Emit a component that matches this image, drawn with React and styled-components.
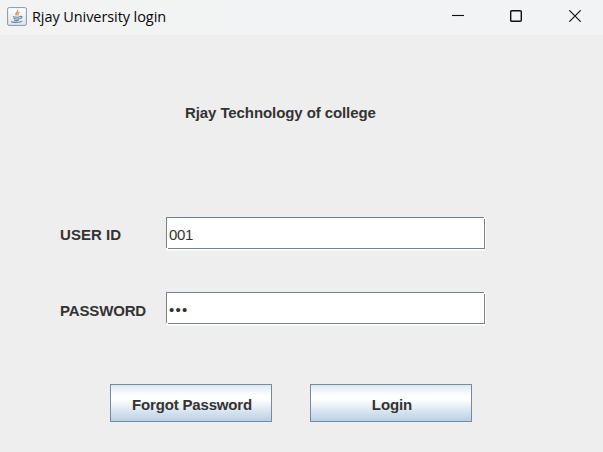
import React from "react";
import styled, { createGlobalStyle } from "styled-components";

const GlobalStyle = createGlobalStyle`
  * { box-sizing: border-box; }
  html, body { margin: 0; padding: 0; overflow: hidden; background: #eeeeee; }
`;

const Window = styled.main`
  display: flex;
  flex-direction: column;
  width: 603px;
  height: 452px;
  background: #eeeeee;
  color: #333333;
  font-family: "Liberation Sans", Arial, sans-serif;
`;

const TitleBar = styled.header`
  display: flex;
  align-items: center;
  height: 35px;
  flex: none;
  padding: 0 22px 3px 7px;
  background: linear-gradient(90deg, #f3f3f3, #f1f3f5);
`;

const WindowTitle = styled.span`
  flex: 1;
  margin-left: 5px;
  padding-top: 2px;
  color: #080808;
  font: 14.5px/20px "Open Sans", "Noto Sans", sans-serif;
  letter-spacing: ${(p) => p.$spacing};
  white-space: nowrap;
`;

const WindowControls = styled.div`
  display: grid;
  grid-template-columns: 58px 59px 12px;
`;

const ControlButton = styled.button`
  display: flex;
  width: 12px;
  height: 12px;
  padding: 0;
  border: 0;
  background: none;
  color: #111111;
`;

const Heading = styled.h1`
  margin: 68px 0 0 185px;
  font-size: 15px;
  font-weight: 700;
  line-height: 20px;
  letter-spacing: -0.09px;
  white-space: nowrap;
`;

const Form = styled.form`
  display: flex;
  flex-direction: column;
  gap: 43px;
  margin: 94px 0 0 60px;
`;

const Field = styled.div`
  display: grid;
  grid-template-columns: 106px 319px;
  height: 32px;
`;

const Label = styled.label`
  padding-top: ${(p) => p.$top};
  font-size: 15px;
  font-weight: 700;
  line-height: 18px;
  letter-spacing: ${(p) => p.$spacing};
  white-space: nowrap;
`;

const Input = styled.input`
  width: 319px;
  height: 32px;
  padding: 4px 3px 1px;
  border: 0;
  border-radius: 0;
  outline: none;
  background:
    linear-gradient(#7a8188, #7a8188) 0 0 / 318px 1px no-repeat,
    linear-gradient(#7a8188, #7a8188) 0 0 / 1px 31px no-repeat,
    linear-gradient(#7a8188, #7a8188) 318px 2px / 1px 30px no-repeat,
    linear-gradient(#7a8188, #7a8188) 2px 31px / 317px 1px no-repeat,
    #ffffff;
  box-shadow: 1px 1px 0 #ffffff, 1px 2px 0 #f8f8f8;
  color: #333333;
  font: 15px "Liberation Sans", Arial, sans-serif;
  letter-spacing: ${(p) => p.$spacing};
`;

const Actions = styled.div`
  display: flex;
  gap: 38px;
  margin: 17px 0 0 50px;
`;

const ActionButton = styled.button`
  width: 162px;
  height: 38px;
  padding: 2px 0 0 2px;
  border: 1px solid #7a8a99;
  border-radius: 0;
  background: linear-gradient(#dde8f3 0%, #ffffff 30%, #ffffff 40%, #b8cfe5 100%);
  color: #333333;
  font: 700 15px "Liberation Sans", Arial, sans-serif;
  letter-spacing: ${(p) => p.$spacing};
  white-space: nowrap;
`;

function JavaIcon() {
  return (
    <svg width="20" height="19" viewBox="0 0 20 19" fill="none" aria-hidden="true">
      <defs>
        <linearGradient id="tile" x2="0" y2="1">
          <stop stopColor="#ffffff" />
          <stop offset="1" stopColor="#dce5eb" />
        </linearGradient>
      </defs>
      <rect x=".6" y=".6" width="18.8" height="17.8" rx="1.5" fill="url(#tile)" stroke="#8499a7" />
      <path d="M10.3 3c1.8 2-3.2 3-.8 5.5M12.6 5c-2.2 1-2.4 1.8-1.1 3.4" stroke="#e58b4d" strokeWidth="1.3" />
      <path d="M6 9.5c1.8 1 5.8.8 7.5 0M6.4 11.3c2 1 4.5.8 6.1.2M7 13c1.5.8 3.7.7 5 0M4.5 14.2c-.5 1.6 9 1.6 10.6 0M13.2 9.5c2.6-.7 2.4 1.7-.5 2.3" stroke="#6386a0" strokeWidth="1.1" />
    </svg>
  );
}

export default function App() {
  return (
    <>
      <GlobalStyle />
      <Window>
        <TitleBar>
          <JavaIcon />
          <WindowTitle $spacing="-0.08px">Rjay University login</WindowTitle>
          <WindowControls>
            <ControlButton aria-label="Minimize">
              <svg width="12" height="12"><path d="M0 5.5h12" stroke="currentColor" strokeWidth="1.1" /></svg>
            </ControlButton>
            <ControlButton aria-label="Maximize">
              <svg width="12" height="12" fill="none"><rect x=".7" y=".7" width="10.6" height="10.6" rx="1" stroke="currentColor" strokeWidth="1.4" /></svg>
            </ControlButton>
            <ControlButton aria-label="Close">
              <svg width="12" height="12"><path d="m.3.3 11.4 11.4m0-11.4L.3 11.7" stroke="currentColor" strokeWidth="1.2" /></svg>
            </ControlButton>
          </WindowControls>
        </TitleBar>
        <Heading>Rjay Technology of college</Heading>
        <Form onSubmit={(e) => e.preventDefault()}>
          <Field>
            <Label htmlFor="user" $top="9px" $spacing="0.05px">USER ID</Label>
            <Input id="user" defaultValue="001" $spacing="-0.3px" />
          </Field>
          <Field>
            <Label htmlFor="password" $top="10px" $spacing="-0.15px">PASSWORD</Label>
            <Input id="password" defaultValue="•••" $spacing="1.3px" />
          </Field>
          <Actions>
            <ActionButton type="button" $spacing="-0.17px">Forgot Password</ActionButton>
            <ActionButton type="submit" $spacing="-0.1px">Login</ActionButton>
          </Actions>
        </Form>
      </Window>
    </>
  );
}
